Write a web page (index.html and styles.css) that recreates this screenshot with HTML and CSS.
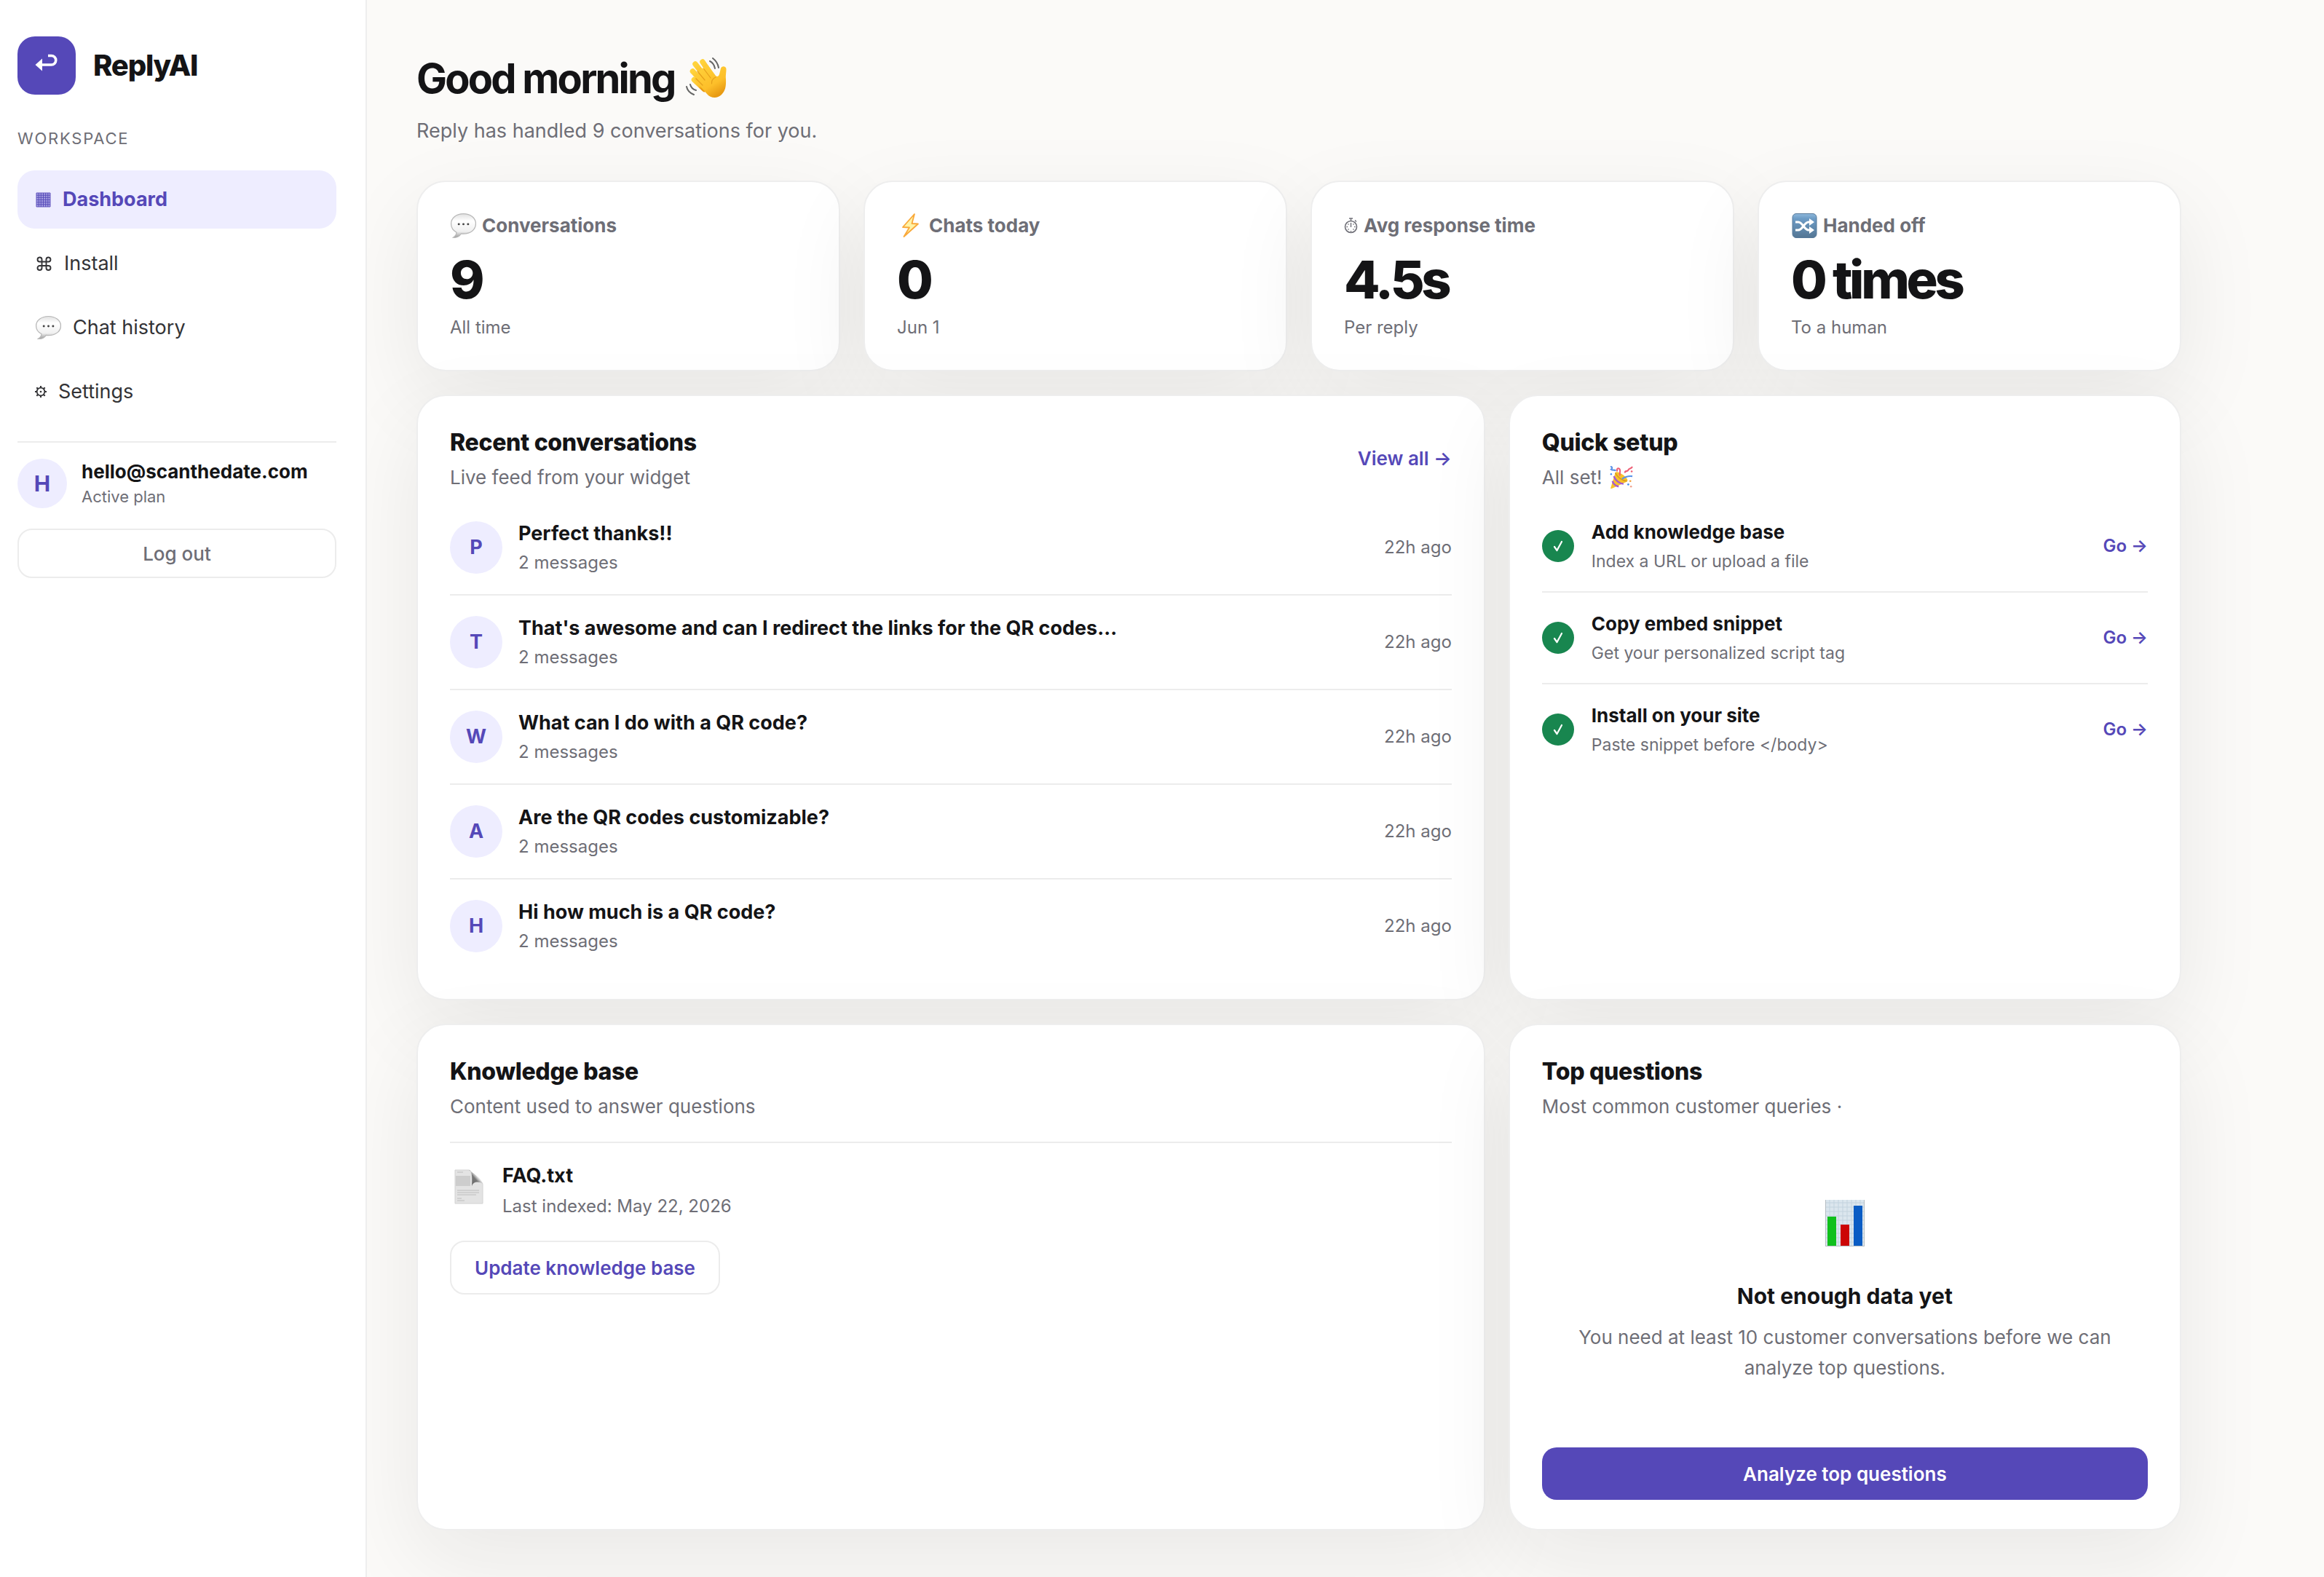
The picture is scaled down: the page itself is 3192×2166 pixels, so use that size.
FILE: index.html
```html
<!DOCTYPE html>
<html lang="en">
<head>
    <meta charset="UTF-8">
    <meta name="viewport" content="width=device-width, initial-scale=1.0">
    <title>ReplyAI Dashboard</title>
    <link rel="stylesheet" href="styles.css">
</head>
<body>

    <!-- shared icons -->
    <svg class="defs" aria-hidden="true">
        <defs>
            <linearGradient id="bubbleFill" x1="0" y1="0" x2="0" y2="1">
                <stop offset="0" stop-color="#e0e0e0"/>
                <stop offset="0.3" stop-color="#ffffff"/>
                <stop offset="0.75" stop-color="#f0f0f0"/>
                <stop offset="1" stop-color="#999999"/>
            </linearGradient>
            <symbol id="bubble" viewBox="0 0 34 34">
                <path d="M17.500 1.500C8.300 1.500 1.500 7 1.500 14.500c0 5 2.800 9 7 11.200 0 2.800-1.500 4.800-4.300 6.600 4.300.5 8-1.300 10.300-4.900 1 .1 2 .2 3 .2 9.200 0 16-5.600 16-13.100S26.700 1.500 17.500 1.500z" fill="url(#bubbleFill)" stroke="#b8b8b8" stroke-width="1.200"/>
                <circle cx="11.500" cy="15" r="1.400" fill="#444"/>
                <circle cx="17.500" cy="15" r="1.400" fill="#444"/>
                <circle cx="23.500" cy="15" r="1.400" fill="#444"/>
            </symbol>
            <symbol id="check" viewBox="0 0 20 20">
                <path d="M5 11L8.500 16 15 4" fill="none" stroke="#fff" stroke-width="2.200" stroke-linecap="round" stroke-linejoin="round"/>
            </symbol>
        </defs>
    </svg>

    <div class="app">

        <aside class="sidebar">
            <div class="brand">
                <div class="brand-logo">
                    <svg width="32" height="26" viewBox="0 0 32 26">
                        <path d="M18 3.500h4.500a6 6 0 0 1 0 12.500H9" fill="none" stroke="#fff" stroke-width="3.600"/>
                        <path d="M0.500 16l9.500-8.500v17z" fill="#fff"/>
                    </svg>
                </div>
                <span class="brand-name">ReplyAI</span>
            </div>

            <div class="nav-label">WORKSPACE</div>
            <nav class="nav">
                <a class="nav-item active" href="#">
                    <svg width="22" height="22" viewBox="0 0 22 22">
                        <rect x="2" y="2" width="19" height="19" fill="#a59ee0"/>
                        <path d="M2 2h19v19H2zM5.200 2v19M8.300 2v19M11.500 2v19M14.700 2v19M17.800 2v19M2 5.200h19M2 8.300h19M2 11.500h19M2 14.700h19M2 17.800h19" fill="none" stroke="#5548b8" stroke-width="0.900"/>
                    </svg>
                    <span>Dashboard</span>
                </a>
                <a class="nav-item" href="#">
                    <svg width="24" height="24" viewBox="0 0 24 24">
                        <path d="M9.500 9.500V6A3 3 0 1 0 6.500 9.500h12A3 3 0 1 0 15.500 6v12a3 3 0 1 0 3-3h-12a3 3 0 1 0 3 3z" fill="none" stroke="#333336" stroke-width="1.900"/>
                    </svg>
                    <span>Install</span>
                </a>
                <a class="nav-item" href="#">
                    <svg width="36" height="34" viewBox="0 0 34 34" preserveAspectRatio="none"><use href="#bubble"/></svg>
                    <span>Chat history</span>
                </a>
                <a class="nav-item" href="#">
                    <svg width="16" height="18" viewBox="0 0 18 18">
                        <circle cx="9" cy="9" r="6" fill="none" stroke="#333336" stroke-width="2"/>
                        <circle cx="9" cy="9" r="1.500" fill="#333336"/>
                        <path d="M9 0v3M9 15v3M0 9h3M15 9h3M2.600 2.600l2.200 2.200M13.200 13.200l2.200 2.200M2.600 15.400l2.200-2.200M13.200 4.800l2.200-2.200" stroke="#333336" stroke-width="2.400"/>
                    </svg>
                    <span>Settings</span>
                </a>
            </nav>

            <div class="account">
                <div class="user">
                    <div class="avatar avatar-small">H</div>
                    <div>
                        <div class="user-mail">hello@scanthedate.com</div>
                        <div class="user-plan">Active plan</div>
                    </div>
                </div>
                <button class="btn btn-logout">Log out</button>
            </div>
        </aside>

        <main class="main">
            <div class="content">
                <header class="page-head">
                    <h1>
                        <span>Good morning</span>
                        <svg width="60" height="58" viewBox="0 0 60 58">
                            <defs>
                                <linearGradient id="hand" x1="0" y1="0" x2="0.600" y2="1">
                                    <stop offset="0" stop-color="#ffd33c"/>
                                    <stop offset="0.700" stop-color="#fdbf2a"/>
                                    <stop offset="1" stop-color="#e89a12"/>
                                </linearGradient>
                            </defs>
                            <g fill="none" stroke="url(#hand)" stroke-width="7.500" stroke-linecap="round">
                                <path d="M14 9l17 22"/>
                                <path d="M24 6l14 21"/>
                                <path d="M10.500 19l18 19"/>
                                <path d="M12.500 30.500l14 13"/>
                            </g>
                            <path d="M22 41L12 30l10-14L31 10l11 15c2 2 4 1 5-2l2-8c1-4 7.500-3.500 7.500 1 0 5-1 8-.500 14 .5 10-1 16-6 21-6 6-15 5-20-1z" fill="url(#hand)"/>
                            <path d="M17 19l10 12M26 16l9 12M15 29l9 9" stroke="#e59f1b" stroke-width="1.200" fill="none" stroke-linecap="round"/>
                            <path d="M42 27c-4 2-6 5-5.500 9" stroke="#e59f1b" stroke-width="1.200" fill="none" stroke-linecap="round"/>
                            <path d="M34 5c4 2 6 5 7 10M38 1c4 3 7 7 8 13M2 40c1 5 5 9 10 11M7 37c1 4 4 7 8 8" stroke="#666" stroke-width="2" fill="none" stroke-linecap="round"/>
                        </svg>
                    </h1>
                    <p>Reply has handled 9 conversations for you.</p>
                </header>

                <section class="stats">
                    <div class="card stat">
                        <div class="stat-label">
                            <svg width="36" height="36" viewBox="0 0 34 34"><use href="#bubble"/></svg>
                            <span>Conversations</span>
                        </div>
                        <div class="stat-value">9</div>
                        <div class="stat-note">All time</div>
                    </div>
                    <div class="card stat">
                        <div class="stat-label">
                            <svg width="36" height="36" viewBox="0 0 36 36">
                                <path d="M24 2L8 20l9 .5L9.500 33 29 15.500l-8.500-.5z" fill="#fff3a6" stroke="#f9a93a" stroke-width="1.800" stroke-linejoin="round"/>
                            </svg>
                            <span>Chats today</span>
                        </div>
                        <div class="stat-value">0</div>
                        <div class="stat-note">Jun 1</div>
                    </div>
                    <div class="card stat">
                        <div class="stat-label">
                            <svg width="19" height="22" viewBox="0 0 18 22">
                                <circle cx="9" cy="12.500" r="8" fill="none" stroke="#6e6e76" stroke-width="1.600"/>
                                <path d="M9 4V1M6.500 1h5M14.500 3.500l2 2M9 7v6M9 18v1.500M3 12.500h1.500M13.500 12.500H15M5 8.500l1 1M13 8.500l-1 1M5 16.500l1-1M13 16.500l-1-1" fill="none" stroke="#6e6e76" stroke-width="1.400"/>
                            </svg>
                            <span>Avg response time</span>
                        </div>
                        <div class="stat-value">4.5s</div>
                        <div class="stat-note">Per reply</div>
                    </div>
                    <div class="card stat">
                        <div class="stat-label">
                            <svg width="36" height="34" viewBox="0 0 36 34">
                                <defs>
                                    <linearGradient id="tile" x1="0" y1="0" x2="0" y2="1">
                                        <stop offset="0" stop-color="#8fb9dc"/>
                                        <stop offset="0.200" stop-color="#6d9cc6"/>
                                        <stop offset="1" stop-color="#547694"/>
                                    </linearGradient>
                                </defs>
                                <rect x="2" y="0.500" width="33" height="33" rx="5" fill="url(#tile)" stroke="#55789a"/>
                                <path d="M6 12h4c6 0 8 11 14 11h3M6 23h4c6 0 8-11 14-11h3" fill="none" stroke="#fff" stroke-width="3"/>
                                <path d="M25 7l7 5-7 5zM25 18l7 5-7 5z" fill="#fff"/>
                            </svg>
                            <span>Handed off</span>
                        </div>
                        <div class="stat-value">0 times</div>
                        <div class="stat-note">To a human</div>
                    </div>
                </section>

                <section class="panels">
                    <div class="card panel">
                        <div class="panel-head">
                            <div>
                                <h2>Recent conversations</h2>
                                <p>Live feed from your widget</p>
                            </div>
                            <a class="link" href="#">View all →</a>
                        </div>
                        <ul class="rows rows-chats">
                            <li class="row">
                                <div class="avatar">P</div>
                                <div class="row-text"><strong>Perfect thanks!!</strong><span>2 messages</span></div>
                                <time>22h ago</time>
                            </li>
                            <li class="row">
                                <div class="avatar">T</div>
                                <div class="row-text"><strong>That's awesome and can I redirect the links for the QR codes...</strong><span>2 messages</span></div>
                                <time>22h ago</time>
                            </li>
                            <li class="row">
                                <div class="avatar">W</div>
                                <div class="row-text"><strong>What can I do with a QR code?</strong><span>2 messages</span></div>
                                <time>22h ago</time>
                            </li>
                            <li class="row">
                                <div class="avatar">A</div>
                                <div class="row-text"><strong>Are the QR codes customizable?</strong><span>2 messages</span></div>
                                <time>22h ago</time>
                            </li>
                            <li class="row">
                                <div class="avatar">H</div>
                                <div class="row-text"><strong>Hi how much is a QR code?</strong><span>2 messages</span></div>
                                <time>22h ago</time>
                            </li>
                        </ul>
                    </div>

                    <div class="card panel">
                        <div class="panel-head">
                            <div>
                                <h2>Quick setup</h2>
                                <p class="with-icon">
                                    <span>All set!</span>
                                    <svg width="36" height="32" viewBox="0 0 36 34">
                                        <path d="M9 10c2-5 18 6 18 11 0 1-1 2-2 2.500L4 33c-1.500.5-2-.5-1.500-1.500z" fill="#f8c22c"/>
                                        <path d="M7 15c2 6 8 11 14 11M5 22c1 4 5 7 9 8" stroke="#a45bd0" stroke-width="2.600" fill="none"/>
                                        <path d="M9 10c3 6 10 12 17 12" stroke="#d99a1c" stroke-width="1.500" fill="none"/>
                                        <path d="M2 1c3 0 3 3 1 4 2 2 5 0 7 2M19 19c4-3 8-5 15-4" stroke="#5a92e8" stroke-width="2.200" fill="none"/>
                                        <path d="M12 8c-2-6 4-6 4-1 0 3-1 5 0 7M23 10c0-4 4-1 5-4 0-3 4-1 6-5" stroke="#ee5f76" stroke-width="2.200" fill="none"/>
                                        <circle cx="3" cy="12" r="1.300" fill="#4a8df0"/>
                                        <circle cx="31" cy="22" r="1.400" fill="#f5a13c"/>
                                        <circle cx="33" cy="8" r="1.400" fill="#ee5f76"/>
                                        <circle cx="28" cy="27" r="1.400" fill="#4a8df0"/>
                                        <circle cx="32" cy="30" r="1.400" fill="#f0a08a"/>
                                    </svg>
                                </p>
                            </div>
                        </div>
                        <ul class="rows rows-steps">
                            <li class="row">
                                <div class="done"><svg width="20" height="20"><use href="#check"/></svg></div>
                                <div class="row-text"><strong>Add knowledge base</strong><span>Index a URL or upload a file</span></div>
                                <a class="link link-small" href="#">Go →</a>
                            </li>
                            <li class="row">
                                <div class="done"><svg width="20" height="20"><use href="#check"/></svg></div>
                                <div class="row-text"><strong>Copy embed snippet</strong><span>Get your personalized script tag</span></div>
                                <a class="link link-small" href="#">Go →</a>
                            </li>
                            <li class="row">
                                <div class="done"><svg width="20" height="20"><use href="#check"/></svg></div>
                                <div class="row-text"><strong>Install on your site</strong><span>Paste snippet before &lt;/body&gt;</span></div>
                                <a class="link link-small" href="#">Go →</a>
                            </li>
                        </ul>
                    </div>

                    <div class="card panel">
                        <div class="panel-head">
                            <div>
                                <h2>Knowledge base</h2>
                                <p>Content used to answer questions</p>
                            </div>
                        </div>
                        <div class="source">
                            <svg width="52" height="58" viewBox="0 0 52 58">
                                <defs>
                                    <linearGradient id="curl" x1="0" y1="1" x2="1" y2="0">
                                        <stop offset="0" stop-color="#666"/>
                                        <stop offset="0.450" stop-color="#777"/>
                                        <stop offset="0.600" stop-color="#e4e4e4"/>
                                        <stop offset="1" stop-color="#f6f6f6"/>
                                    </linearGradient>
                                </defs>
                                <path d="M7 7h19c3 0 4 6 5 14 7 0 14 1 14 6v26H7z" fill="#e3e3e3" stroke="#d2d2d2"/>
                                <path d="M8 15h20v14H8z" fill="#cdcdcd"/>
                                <path d="M26 7c4 0 5 8 4 22 2-6 9-7 15-3C44 19 32 11 26 7z" fill="url(#curl)"/>
                                <path d="M10 10h8M10 35h30M10 38h30M10 41h26M10 46h6M10 49h10" stroke="#bdbdbd" stroke-width="1.200"/>
                            </svg>
                            <div class="row-text"><strong>FAQ.txt</strong><span>Last indexed: May 22, 2026</span></div>
                        </div>
                        <button class="btn btn-outline">Update knowledge base</button>
                    </div>

                    <div class="card panel">
                        <div class="panel-head">
                            <div>
                                <h2>Top questions</h2>
                                <p>Most common customer queries ·</p>
                            </div>
                        </div>
                        <div class="empty">
                            <svg width="54" height="64" viewBox="0 0 54 64">
                                <rect width="54" height="64" fill="#dbe6ee"/>
                                <path d="M0 4h54M0 10h54M0 16h54M0 22h54M0 28h54M0 34h54M0 40h54M0 46h54M0 52h54M0 58h54M6 0v64M12 0v64M18 0v64M24 0v64M30 0v64M36 0v64M42 0v64M48 0v64" stroke="#c3d3de" stroke-width="1"/>
                                <path d="M0.500 0v64M53.500 0v64M0 63.500h54" stroke="#b4bcc2" stroke-width="1"/>
                                <rect x="3" y="23" width="12" height="40" fill="#10c01c"/>
                                <rect x="21" y="34" width="12" height="29" fill="#cc0505"/>
                                <rect x="39" y="8" width="12" height="55" fill="#0a5cc4"/>
                            </svg>
                            <h3>Not enough data yet</h3>
                            <p>You need at least 10 customer conversations before we can analyze top questions.</p>
                        </div>
                        <button class="btn btn-primary">Analyze top questions</button>
                    </div>
                </section>
            </div>
        </main>

    </div>

</body>
</html>
```

FILE: styles.css
```css
* {
    box-sizing: border-box;
}
body {
    margin: 0;
    font-family: Inter, "Liberation Sans", sans-serif;
    font-size: 26px;
    line-height: 32px;
    background: #fbfaf8;
    color: #141416;
}
h1, h2, h3, p, ul {
    margin: 0;
    padding: 0;
}
a {
    text-decoration: none;
}
svg {
    display: block;
    flex-shrink: 0;
}
.defs {
    position: absolute;
    width: 0;
    height: 0;
}
.app {
    display: flex;
    min-height: 100vh;
}

/* sidebar */
.sidebar {
    position: relative;
    z-index: 1;
    width: 504px;
    flex-shrink: 0;
    padding: 50px 40px 50px 24px;
    background: #fff;
    border-right: 2px solid #eee;
}
.brand {
    display: flex;
    align-items: center;
    gap: 24px;
    margin-bottom: 44px;
}
.brand-logo {
    display: flex;
    align-items: center;
    justify-content: center;
    width: 80px;
    height: 80px;
    padding-bottom: 8px;
    border-radius: 24px;
    background: #5548b8;
}
.brand-name {
    font-size: 40px;
    line-height: 48px;
    font-weight: 800;
    letter-spacing: -0.03em;
}
.nav-label {
    font-size: 22px;
    line-height: 32px;
    letter-spacing: 0.08em;
    color: #6e6e76;
    margin-bottom: 28px;
}
.nav {
    display: flex;
    flex-direction: column;
    gap: 8px;
    margin-bottom: 28px;
}
.nav-item {
    display: flex;
    align-items: center;
    gap: 16px;
    height: 80px;
    padding: 0 24px;
    border-radius: 24px;
    font-size: 27px;
    color: #333336;
}
.nav-item.active {
    background: #eeedff;
    color: #5548b8;
    font-weight: 700;
}
.account {
    border-top: 2px solid #ececec;
    padding-top: 22px;
}
.user {
    display: flex;
    align-items: center;
    gap: 20px;
    margin-bottom: 28px;
}
.user-mail {
    font-weight: 700;
    line-height: 36px;
}
.user-plan {
    font-size: 22px;
    line-height: 32px;
    color: #6e6e76;
}
.avatar {
    display: flex;
    align-items: center;
    justify-content: center;
    flex-shrink: 0;
    width: 72px;
    height: 72px;
    border-radius: 50%;
    background: #eeedff;
    color: #5548b8;
    font-size: 27px;
    font-weight: 700;
}
.avatar-small {
    width: 68px;
    height: 68px;
    font-size: 30px;
}

/* buttons and links */
.btn {
    height: 72px;
    border-radius: 20px;
    font-family: inherit;
    font-size: 26px;
    font-weight: 600;
    cursor: pointer;
}
.btn-logout {
    width: 100%;
    height: 68px;
    background: #fff;
    border: 2px solid #ececec;
    color: #6e6e76;
    font-weight: 500;
}
.btn-outline {
    align-self: flex-start;
    height: 74px;
    padding: 0 32px;
    background: #fff;
    border: 2px solid #ececec;
    color: #5548b8;
}
.btn-primary {
    border: none;
    background: #5548b8;
    color: #fff;
}
.link {
    color: #5548b8;
    font-weight: 600;
}
.link-small {
    font-size: 24px;
}

/* main area */
.main {
    flex: 1;
    padding: 64px 68px;
}
.content {
    max-width: 2424px;
}
.page-head {
    margin-bottom: 44px;
}
.page-head h1 {
    display: flex;
    align-items: center;
    gap: 14px;
    font-size: 56px;
    line-height: 88px;
    font-weight: 700;
    letter-spacing: -0.05em;
    margin-bottom: 4px;
}
.page-head p {
    font-size: 27px;
    line-height: 48px;
    color: #6e6e76;
}
.card {
    background: #fff;
    border: 2px solid #eee;
    border-radius: 40px;
    box-shadow: 0 40px 120px rgba(20, 20, 30, 0.08);
}
.stats {
    display: grid;
    grid-template-columns: repeat(4, 1fr);
    gap: 32px;
    margin-bottom: 32px;
}
.stat {
    padding: 42px 44px;
}
.stat-label {
    display: flex;
    align-items: center;
    gap: 8px;
    line-height: 36px;
    font-weight: 700;
    color: #6e6e76;
}
.stat-value {
    margin: 14px 0 8px;
    font-size: 72px;
    line-height: 84px;
    font-weight: 800;
    letter-spacing: -0.06em;
}
.stat-note {
    font-size: 24px;
    color: #6e6e76;
}
.panels {
    display: grid;
    grid-template-columns: 1.35fr 0.85fr;
    gap: 32px;
}
.panel {
    display: flex;
    flex-direction: column;
    padding: 44px 44px 40px;
}
.panel-head {
    display: flex;
    align-items: center;
    justify-content: space-between;
    margin-bottom: 16px;
}
.panel-head h2 {
    font-size: 32px;
    line-height: 40px;
    font-weight: 800;
    letter-spacing: -0.01em;
    margin-bottom: 12px;
}
.panel-head p {
    color: #6e6e76;
}
.with-icon {
    display: flex;
    align-items: center;
    gap: 8px;
}
.rows {
    list-style: none;
}
.row {
    display: flex;
    align-items: center;
    gap: 22px;
    padding: 28px 0;
    border-bottom: 2px solid #ececec;
}
.row:last-child {
    border-bottom: none;
}
.rows-chats .row:last-child {
    padding-bottom: 24px;
}
.row-text {
    display: flex;
    flex-direction: column;
    flex: 1;
    gap: 12px;
}
.row-text strong {
    font-size: 27px;
    line-height: 30px;
    font-weight: 700;
}
.row-text span {
    font-size: 24px;
    line-height: 26px;
    color: #6e6e76;
}
.rows-steps .row {
    gap: 24px;
}
.rows-steps strong {
    font-size: 26px;
}
.rows-steps .row-text span {
    font-size: 23px;
}
.row time {
    font-size: 24px;
    color: #6e6e76;
}
.done {
    display: flex;
    align-items: center;
    justify-content: center;
    width: 44px;
    height: 44px;
    border-radius: 50%;
    background: #18864f;
}
.source {
    display: flex;
    align-items: flex-start;
    gap: 20px;
    margin-top: 16px;
    padding: 30px 0 34px;
    border-top: 2px solid #ececec;
}
.source .row-text {
    gap: 14px;
}
.empty {
    display: flex;
    flex-direction: column;
    align-items: center;
    flex: 1;
    padding: 96px 40px 88px;
    text-align: center;
}
.empty h3 {
    margin: 48px 0 16px;
    font-size: 30px;
    line-height: 40px;
    font-weight: 700;
}
.empty p {
    line-height: 42px;
    color: #6e6e76;
}
```
